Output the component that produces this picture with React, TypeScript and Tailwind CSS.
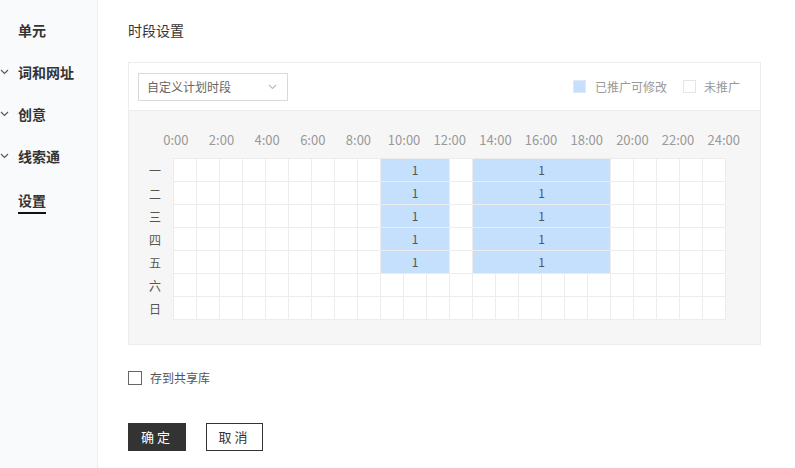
import React from 'react';

const days = ['一', '二', '三', '四', '五', '六', '日'];
const hours = ['0:00', '2:00', '4:00', '6:00', '8:00', '10:00', '12:00', '14:00', '16:00', '18:00', '20:00', '22:00', '24:00'];

function Chevron({ className }: { className?: string }) {
  return (
    <svg width="9" height="6" viewBox="0 0 9 6" className={ className }>
      <path d="M1 1l3.5 3.5L8 1" fill="none" stroke="currentColor" strokeWidth="1.1"/>
    </svg>
  );
}

function Sidebar() {
  const items = [
    { label: '单元', arrow: false },
    { label: '词和网址', arrow: true },
    { label: '创意', arrow: true },
    { label: '线索通', arrow: true },
  ];
  return (
    <div className="w-[98px] shrink-0 bg-[#f9fafc] border-r border-[#eeeeee] pt-[19px]">
      { items.map((item) => (
        <div key={ item.label } className="relative h-[42px] flex items-start pl-[18px]">
          { item.arrow && <Chevron className="absolute left-[0px] top-[8px] text-[#555]"/> }
          <span className="text-[14px] leading-[22px] font-bold text-[#333]">{ item.label }</span>
        </div>
      )) }
      <div className="pl-[18px]">
        <span className="inline-block text-[14px] leading-[22px] font-bold text-[#333] border-b-2 border-[#111] pb-[1px]">设置</span>
      </div>
    </div>
  );
}

function Schedule() {
  const rows = days.map((day, r) => {
    const cells: React.ReactNode[] = [];
    let c = 0;
    while (c < 24) {
      if (r < 5 && c === 9) {
        cells.push(<div key={ c } className="col-span-3 h-[23px] bg-[#c4e0fc] border-r border-b border-[#ececec] flex items-center justify-center text-[12px] text-[#555]">1</div>);
        c += 3;
      } else if (r < 5 && c === 13) {
        cells.push(<div key={ c } className="col-span-6 h-[23px] bg-[#c4e0fc] border-r border-b border-[#ececec] flex items-center justify-center text-[12px] text-[#555]">1</div>);
        c += 6;
      } else {
        cells.push(<div key={ c } className="h-[23px] bg-white border-r border-b border-[#ececec]"/>);
        c += 1;
      }
    }
    return { day, cells };
  });

  return (
    <div className="bg-[#f6f6f6] border-t border-[#ececec] pt-[19px] pb-[24px]">
      <div className="grid grid-cols-[repeat(13,45.67px)] ml-[24px] text-[13px] text-[#999] text-center leading-[20px]">
        { hours.map((h) => <span key={ h }>{ h }</span>) }
      </div>
      <div className="flex mt-[9px]">
        <div className="w-[44px] flex flex-col">
          { days.map((d) => (
            <div key={ d } className="h-[23px] flex items-center justify-center pl-[8px] text-[12px] text-[#555]">{ d }</div>
          )) }
        </div>
        <div className="grid grid-cols-[repeat(24,23px)] border-l border-t border-[#ececec] mt-[-1px]">
          { rows.map((row) => row.cells) }
        </div>
      </div>
    </div>
  );
}

export default function App() {
  return (
    <div className="flex w-[795px] h-[468px] bg-white overflow-hidden" style={ { fontFamily: '"Noto Sans CJK SC", "Noto Sans", sans-serif' } }>
      <Sidebar/>
      <div className="flex-1 pl-[30px] pt-[19px]">
        <p className="text-[14px] leading-[22px] text-[#333]">时段设置</p>
        <div className="mt-[21px] w-[633px] border border-[#ececec]">
          <div className="h-[47px] flex items-center justify-between px-[9px]">
            <div className="w-[150px] h-[28px] border border-[#d9d9d9] flex items-center justify-between pl-[8px] pr-[10px]">
              <span className="text-[12px] text-[#666]">自定义计划时段</span>
              <Chevron className="text-[#bbb]"/>
            </div>
            <div className="flex items-center text-[12px] text-[#999] pr-[11px]">
              <span className="w-[13px] h-[13px] bg-[#c4e0fc] border border-[#dde9f5]"/>
              <span className="ml-[9px]">已推广可修改</span>
              <span className="w-[13px] h-[13px] bg-white border border-[#e5e5e5] ml-[16px]"/>
              <span className="ml-[8px]">未推广</span>
            </div>
          </div>
          <Schedule/>
        </div>
        <label className="flex items-center mt-[24px]">
          <span className="w-[14px] h-[14px] border border-[#666] bg-white"/>
          <span className="ml-[8px] text-[12px] text-[#555]">存到共享库</span>
        </label>
        <div className="flex mt-[36px] gap-[20px]">
          <button className="w-[58px] h-[28px] bg-[#333] text-white text-[13px] tracking-[3px]">确定</button>
          <button className="w-[57px] h-[28px] border border-[#333] bg-white text-[#333] text-[13px] tracking-[3px]">取消</button>
        </div>
      </div>
    </div>
  );
}
